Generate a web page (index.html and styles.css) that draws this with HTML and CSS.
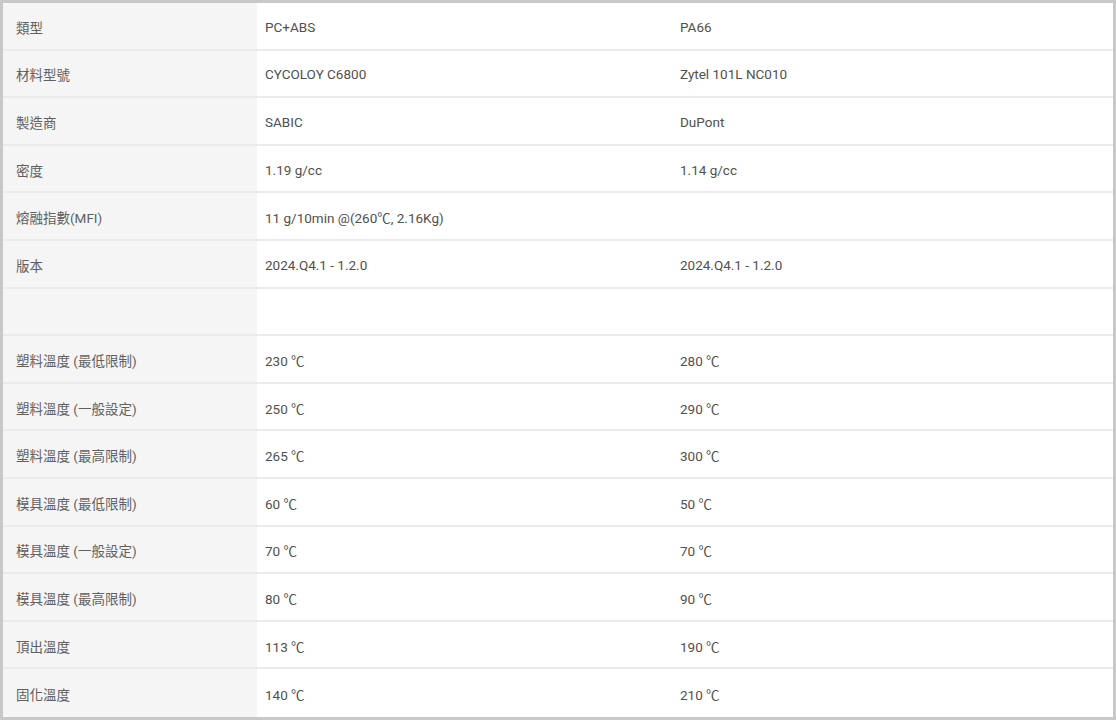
FILE: index.html
```html
<!DOCTYPE html>
<html lang="zh-Hant">
<head>
<meta charset="utf-8">
<title>材料比較</title>
<link rel="stylesheet" href="styles.css">
</head>
<body>
<div class="compare">
  <div class="row"><div class="label">類型</div><div class="cell">PC+ABS</div><div class="cell">PA66</div></div>
  <div class="row"><div class="label">材料型號</div><div class="cell">CYCOLOY C6800</div><div class="cell">Zytel 101L NC010</div></div>
  <div class="row"><div class="label">製造商</div><div class="cell">SABIC</div><div class="cell">DuPont</div></div>
  <div class="row"><div class="label">密度</div><div class="cell">1.19 g/cc</div><div class="cell">1.14 g/cc</div></div>
  <div class="row"><div class="label">熔融指數(MFI)</div><div class="cell">11 g/10min @(260℃, 2.16Kg)</div><div class="cell"></div></div>
  <div class="row"><div class="label">版本</div><div class="cell">2024.Q4.1 - 1.2.0</div><div class="cell">2024.Q4.1 - 1.2.0</div></div>
  <div class="row"><div class="label"></div><div class="cell"></div><div class="cell"></div></div>
  <div class="row"><div class="label">塑料溫度 (最低限制)</div><div class="cell">230 ℃</div><div class="cell">280 ℃</div></div>
  <div class="row"><div class="label">塑料溫度 (一般設定)</div><div class="cell">250 ℃</div><div class="cell">290 ℃</div></div>
  <div class="row"><div class="label">塑料溫度 (最高限制)</div><div class="cell">265 ℃</div><div class="cell">300 ℃</div></div>
  <div class="row"><div class="label">模具溫度 (最低限制)</div><div class="cell">60 ℃</div><div class="cell">50 ℃</div></div>
  <div class="row"><div class="label">模具溫度 (一般設定)</div><div class="cell">70 ℃</div><div class="cell">70 ℃</div></div>
  <div class="row"><div class="label">模具溫度 (最高限制)</div><div class="cell">80 ℃</div><div class="cell">90 ℃</div></div>
  <div class="row"><div class="label">頂出溫度</div><div class="cell">113 ℃</div><div class="cell">190 ℃</div></div>
  <div class="row"><div class="label">固化溫度</div><div class="cell">140 ℃</div><div class="cell">210 ℃</div></div>
</div>
</body>
</html>
```
FILE: styles.css
```css
html, body {
  margin: 0;
  padding: 0;
  background: #ffffff;
}
body {
  font-family: Roboto, "Noto Sans CJK TC", sans-serif;
  font-size: 13.5px;
  color: #505050;
}
.compare {
  width: 1116px;
  height: 720px;
  box-sizing: border-box;
  border: 3px solid #c8c8c8;
  display: flex;
  flex-direction: column;
}
.row {
  display: grid;
  grid-template-columns: 254px 415px 1fr;
  height: 47.6px;
  box-sizing: border-box;
  border-bottom: 2px solid #ebebeb;
}
.row:last-child {
  border-bottom: none;
}
.label {
  background: #f5f5f5;
  padding: 2px 0 0 13px;
  display: flex;
  align-items: center;
  color: #606060;
}
.cell {
  padding: 2px 0 0 8px;
  display: flex;
  align-items: center;
}
```
